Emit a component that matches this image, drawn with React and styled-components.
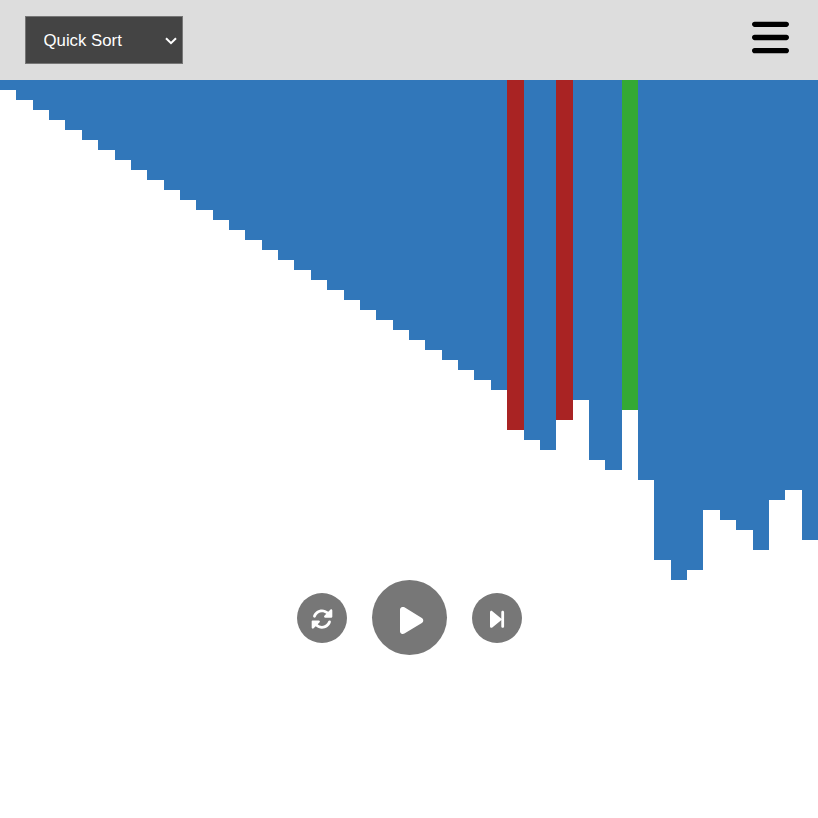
import React from "react";
import styled, { createGlobalStyle } from "styled-components";
import { FaBars } from "react-icons/fa6";

const GlobalStyle = createGlobalStyle`
  * { box-sizing: border-box; }
  body { margin: 0; background: #fff; font-family: "Liberation Sans", Arial, sans-serif; }
`;

const Header = styled.header`
  display: flex;
  justify-content: space-between;
  align-items: flex-start;
  height: 80px;
  padding: 16px 29px 0 25px;
  background: #ddd;
`;

const SelectFrame = styled.div`
  display: grid;
  align-items: center;
  width: 158px;
  height: 48px;
  color: #fff;

  > * { grid-area: 1 / 1; }
`;

const AlgorithmSelect = styled.select`
  appearance: none;
  width: 100%;
  height: 100%;
  padding: 0 0 0 17.5px;
  border: 1px solid #767676;
  border-radius: 0;
  background: #444;
  color: #fff;
  font: 16.8px "Liberation Sans", Arial, sans-serif;
`;

const Chevron = styled.svg`
  justify-self: end;
  width: 12px;
  height: 8px;
  margin: 1px 6px 0 0;
  pointer-events: none;
`;

const MenuButton = styled.button`
  display: flex;
  padding: 0;
  border: 0;
  background: none;
  color: #000;
  font-size: 43px;

  svg { width: 37px; overflow: visible; }
`;

const Chart = styled.main`
  display: grid;
  grid-template-columns: repeat(50, 1fr);
  height: 500px;
`;

const barColors = { idle: "#3177ba", compare: "#a92323", pivot: "#34a934" };

const Bar = styled.div`
  height: ${({ $value }) => $value * 10}px;
  background: ${({ $state }) => barColors[$state]};
`;

const Controls = styled.div`
  display: flex;
  justify-content: center;
  align-items: center;
  gap: 25px;
`;

const RoundButton = styled.button`
  display: flex;
  justify-content: center;
  align-items: center;
  width: ${({ $size }) => $size}px;
  height: ${({ $size }) => $size}px;
  padding: ${({ $inset }) => $inset};
  border: 0;
  border-radius: 50%;
  background: #777;
  color: #fff;
`;

const Glyph = styled.svg`
  flex: none;
  height: ${({ $size }) => $size}px;
  fill: currentColor;
  overflow: visible;
`;

const RotateIcon = () => (
  <Glyph $size={22} viewBox="0 0 512 512">
    <path d="M449.9 39.96l-48.5 48.53C362.5 53.19 311.4 32 256 32C161.5 32 78.59 92.34 49.58 182.2c-5.438 16.81 3.797 34.88 20.61 40.28c16.97 5.5 34.86-3.812 40.3-20.59C130.9 138.5 189.4 96 256 96c37.96 0 73 14.18 100.2 37.8L311.1 178C295.1 194.8 306.8 223.4 330.4 224h146.9C487.7 223.7 496 215.3 496 204.9V59.04C496 34.99 466.9 22.95 449.9 39.96zM441.8 289.6c-16.94-5.438-34.88 3.812-40.3 20.59C381.1 373.5 322.6 416 256 416c-37.96 0-73-14.18-100.2-37.8L200 334C216.9 317.2 205.2 288.6 181.6 288H34.66C24.32 288.3 16 296.7 16 307.1v145.9c0 24.04 29.07 36.08 46.07 19.07l48.5-48.53C149.5 458.8 200.6 480 255.1 480c94.45 0 177.4-60.34 206.4-150.2C467.9 313 458.6 294.1 441.8 289.6z" />
  </Glyph>
);

const PlayIcon = () => (
  <Glyph $size={31} viewBox="0 0 384 512">
    <path d="M361 215C375.3 223.8 384 239.3 384 256C384 272.7 375.3 288.2 361 296.1L73.03 472.1C58.21 482 39.66 482.4 24.52 473.9C9.377 465.4 0 449.4 0 432V80C0 62.64 9.377 46.63 24.52 38.13C39.66 29.64 58.21 29.99 73.03 39.04L361 215z" />
  </Glyph>
);

const StepIcon = () => (
  <Glyph $size={22.7} viewBox="0 0 320 512">
    <path d="M287.1 447.1c17.67 0 31.1-14.33 31.1-32V96.03c0-17.67-14.33-32-32-32c-17.67 0-31.1 14.33-31.1 31.1v319.9C255.1 433.6 270.3 447.1 287.1 447.1zM52.51 440.6l192-159.1c7.625-6.436 11.43-15.53 11.43-24.62c0-9.094-3.809-18.18-11.43-24.62l-192-159.1C31.88 54.28 0 68.66 0 96.03v319.9C0 443.3 31.88 457.7 52.51 440.6z" />
  </Glyph>
);

const values = [
  ...Array.from({ length: 31 }, (_, i) => i + 1),
  35, 36, 37, 34, 32, 38, 39, 33, 40, 48, 50, 49, 43, 44, 45, 47, 42, 41, 46,
];
const states = { 31: "compare", 34: "compare", 38: "pivot" };

export default function App() {
  return (
    <>
      <GlobalStyle />
      <Header>
        <SelectFrame>
          <AlgorithmSelect defaultValue="quick" aria-label="Algorithm">
            <option value="quick">Quick Sort</option>
          </AlgorithmSelect>
          <Chevron viewBox="0 0 12 8" fill="none" stroke="currentColor" strokeWidth="2">
            <path d="M1 1.2L6 6.2L11 1.2" />
          </Chevron>
        </SelectFrame>
        <MenuButton aria-label="Menu"><FaBars /></MenuButton>
      </Header>
      <Chart>
        {values.map((value, i) => (
          <Bar key={value} $value={value} $state={states[i] || "idle"} />
        ))}
      </Chart>
      <Controls>
        <RoundButton $size={50} $inset="2px 0 0" aria-label="Reset"><RotateIcon /></RoundButton>
        <RoundButton $size={75} $inset="6px 0 0 5px" aria-label="Play"><PlayIcon /></RoundButton>
        <RoundButton $size={50} $inset="3px 0 0 1px" aria-label="Step forward"><StepIcon /></RoundButton>
      </Controls>
    </>
  );
}
